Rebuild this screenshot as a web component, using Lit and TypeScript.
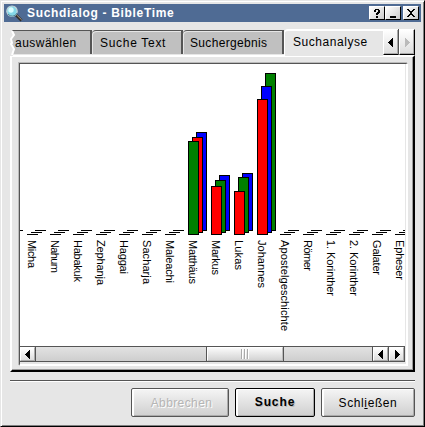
import { LitElement, html, svg, css } from "lit";
import { customElement } from "lit/decorators.js";

type Bar = [color: string, top: number];
interface Book { name: string; len: number; bars?: Bar[] }

const R = "#ff0000", G = "#008000", B = "#0000ff";

// Bars are listed back to front.
const books: Book[] = [
  { name: "", len: 0 },
  { name: "Micha", len: 28 },
  { name: "Nahum", len: 33 },
  { name: "Habakuk", len: 42 },
  { name: "Zephanja", len: 45 },
  { name: "Haggai", len: 34 },
  { name: "Sacharja", len: 44 },
  { name: "Maleachi", len: 43 },
  { name: "Matthäus", len: 44, bars: [[B, 132], [R, 137], [G, 141]] },
  { name: "Markus", len: 35, bars: [[B, 175], [G, 180], [R, 186]] },
  { name: "Lukas", len: 30, bars: [[B, 173], [G, 177], [R, 191]] },
  { name: "Johannes", len: 48, bars: [[G, 73], [B, 86], [R, 99]] },
  { name: "Apostelgeschichte", len: 91 },
  { name: "Römer", len: 31 },
  { name: "1. Korinther", len: 56 },
  { name: "2. Korinther", len: 56 },
  { name: "Galater", len: 35 },
  { name: "Epheser", len: 40 },
];

@customElement("search-chart")
export class SearchChart extends LitElement {
  static styles = css`
    :host { display: block; background: #fff; overflow: hidden; }
    svg { display: block; width: 100%; height: 100%; }
    text { font: 11px "Liberation Sans", Arial, sans-serif; fill: #000; }
  `;
  render() {
    return html`<svg viewBox="20 64 385 282" shape-rendering="crispEdges">
      ${books.map((b, i) => {
        const x = 4 + i * 23;
        return svg`
          ${[0, 1, 2].map((k) => {
            const left = x + 8 - 4 * k, bottom = 231 + 2 * k, bar = b.bars?.[k];
            return bar
              ? svg`<rect x=${left + 0.5} y=${bar[1] + 0.5} width="10" height=${bottom - bar[1] - 1} fill=${bar[0]} stroke="#000"/>`
              : svg`<rect x=${left} y=${bottom - 1} width="11" height="1" fill="#000"/>`;
          })}
          ${b.name ? svg`<text transform="translate(${x + 1} 240) rotate(90)" textLength=${b.len}>${b.name}</text>` : ""}`;
      })}
    </svg>`;
  }
}

@customElement("app-root")
export class AppRoot extends LitElement {
  static styles = css`
    :host { display: block; font: 12px/15px "Liberation Sans", Arial, sans-serif; color: #000; }
    * { box-sizing: border-box; }
    svg { display: block; }
    .window { width: 425px; height: 427px; background: #e6e6e6; padding: 2px 2px 0 3px;
      border: 1px solid; border-color: #e6e6e6 #000 #000 #e6e6e6;
      box-shadow: inset 1px 1px #fff, inset -1px -1px #808080; }
    .title { height: 18px; margin-top: 1px; width: 417px; background: #4f6b94; display: flex; align-items: center; padding: 0 2px 0 2px; color: #fff; }
    .title b { flex: 1; margin-left: 4px; letter-spacing: 0.68px; white-space: nowrap; }
    .tb { width: 16px; height: 14px; background: linear-gradient(135deg, #fff, #ccc); border: 1px solid;
      border-color: #fff #000 #000 #fff; display: grid; place-items: center; }
    .tb.gap { margin-left: 2px; }
    .tabs { display: flex; height: 32px; margin: 8px 0 0 6px; width: 405px; align-items: flex-start; }
    .tab { position: relative; height: 24px; background: #c0c0c0; border-top: 1px solid #555; border-right: 2px solid #555;
      padding: 5px 0 0 8px; white-space: nowrap; }
    .t1 { width: 82px; padding-left: 5px; letter-spacing: .48px; }
    .t2 { width: 91px; letter-spacing: .7px; border-top-left-radius: 4px; box-shadow: inset 1px 1px #e6e6e6; }
    .t3 { width: 101px; letter-spacing: .33px; padding-left: 7px; border-top-left-radius: 4px; box-shadow: inset 1px 1px #e6e6e6; }
    .t4 { width: 99px; letter-spacing: .55px; padding: 4px 0 0 8px; height: 27px; margin-top: -1px; background: #e6e6e6; border: 0 solid #fff; border-width: 2px 0 0 1px; border-top-left-radius: 4px; }
    .tear { position: absolute; left: 0; top: -1px; }
    .nav { height: 26px; width: 16px; margin-top: -1px; border: 1px solid; border-color: #fff #000 #000 #fff; box-shadow: inset -1px -1px #aaa, -1px 0 #555;
      background: linear-gradient(#fff, #ddd); display: grid; place-items: center; }
    .panel { width: 405px; height: 317px; margin: -7px 0 0 6px; border: 2px solid; border-color: #fff #000 #000 #fff;
      box-shadow: inset -1px -1px #999; padding: 5px 7px 7px 6px; }
    .view { width: 389px; height: 303px; border: solid; border-width: 1px 2px 2px 1px; border-color: #555 #fff #fff #555; box-shadow: -1px -1px #bbb; margin: 1px 0 0 1px; }
    search-chart { width: 385px; height: 282px; }
    .scroll { display: flex; width: 385px; height: 16px; border: 1px solid #555; border-left-width: 0; background: linear-gradient(#e2e2e2, #cecece); }
    .sb { width: 15px; height: 14px; border: 1px solid; border-color: #fff #aaa #aaa #fff; background: linear-gradient(#fff, #ddd); display: grid; place-items: center; }
    .sp { width: 1px; background: #555; }
    .track { width: 170px; }
    .track2 { flex: 1; }
    .thumb { width: 76px; border: 1px solid; border-color: #fff #bbb #bbb #fff; background: linear-gradient(#fafafa, #d4d4d4); display: flex; gap: 1px; justify-content: center; align-items: center; }
    .thumb i { width: 2px; height: 10px; background: linear-gradient(90deg, #aaa 50%, #fff 50%); }
    .rule { height: 2px; width: 405px; margin: 8px 0 0 6px; border-top: 1px solid #555; background: #fff; }
    .buttons { display: flex; gap: 6px; width: 405px; margin: 6px 0 0 6px; justify-content: flex-end; }
    .btn { height: 29px; border: 1px solid #555; border-radius: 2px; text-align: center; padding-top: 7px;
      background: linear-gradient(#f5f5f5, #cfcfcf); box-shadow: inset 2px 1px #fff, inset -1px -1px #aaa; letter-spacing: .6px; white-space: nowrap; }
    .off1 { width: 98px; color: #b5b5b5; text-shadow: 1px 1px #fff; letter-spacing: .4px; padding-left: 3px; }
    .def { width: 80px; border-color: #000; font-weight: bold; padding-top: 6px; text-shadow: 1px 1px #bbb; letter-spacing: .9px; }
    .close { width: 94px; }
  `;

  arrow(right: boolean, color = "#000") {
    return html`<svg width="6" height="9" viewBox="0 0 6 9" shape-rendering="crispEdges">
      <path fill=${color} d=${right ? "M1 0h1v1h1v1h1v1h1v1h1v1h-1v1h-1v1h-1v1h-1v1h-1z" : "M5 0h-1v1h-1v1h-1v1h-1v1h-1v1h1v1h1v1h1v1h1v1h1z"}/></svg>`;
  }

  render() {
    return html`<div class="window">
      <div class="title">
        <svg width="17" height="17" viewBox="0 0 17 17">
          <path d="M9.500 9.500L15.500 15.500" stroke="#302c28" stroke-width="2.800"/>
          <path d="M10.500 9.800L15.700 14.900" stroke="#b8a890" stroke-width="0.900"/>
          <circle cx="6" cy="6.200" r="5.200" fill="#84d8e8" stroke="#c4d4d8" stroke-width="1.200"/>
          <path d="M2 9A5.200 5.200 0 0 0 11 8" fill="none" stroke="#407c90" stroke-width="0.900"/>
          <circle cx="5" cy="5" r="2.700" fill="#d8fcff"/>
        </svg>
        <b>Suchdialog - BibleTime</b>
        <span class="tb"><svg width="7" height="9" viewBox="0 0 7 9" shape-rendering="crispEdges"><path d="M1 0h4v1h1v3h-1v1h-1v1h-2v-2h1v-1h1v-2h-2v2h-2v-2h1zM2 7h2v2h-2z"/></svg></span>
        <span class="tb"><svg width="7" height="9" viewBox="0 0 7 9" shape-rendering="crispEdges"><path d="M0 7h6v2h-6z"/></svg></span>
        <span class="tb gap"><svg width="8" height="8" viewBox="0 0 8 8" shape-rendering="crispEdges"><path d="M0 0h2v1h1v1h2v-1h1v-1h2v1h-1v1h-1v1h-1v2h1v1h1v1h1v1h-2v-1h-1v-1h-2v1h-1v1h-2v-1h1v-1h1v-1h1v-2h-1v-1h-1v-1h-1z"/></svg></span>
      </div>
      <div class="tabs">
        <div class="tab t1"><svg class="tear" width="6" height="26" viewBox="0 0 6 26"><path d="M0 0h2l2 5-3 4 1 4-1 1 3 5-1 7H0z" fill="#e6e6e6"/><path d="M2 1l2 4-3 4 1 4-1 1 3 5-2 6" fill="none" stroke="#fff" stroke-width="2"/></svg>auswählen</div>
        <div class="tab t2">Suche Text</div>
        <div class="tab t3">Suchergebnis</div>
        <div class="tab t4">Suchanalyse</div>
        <div class="nav">${this.arrow(false)}</div>
        <div class="nav">${this.arrow(true, "#bbb")}</div>
      </div>
      <div class="panel">
        <div class="view">
          <search-chart></search-chart>
          <div class="scroll">
            <span class="sb">${this.arrow(false)}</span><span class="sp"></span>
            <span class="track"></span><span class="sp"></span>
            <span class="thumb"><i></i><i></i><i></i></span><span class="sp"></span>
            <span class="track2"></span><span class="sp"></span>
            <span class="sb">${this.arrow(false)}</span><span class="sp"></span>
            <span class="sb">${this.arrow(true)}</span>
          </div>
        </div>
      </div>
      <div class="rule"></div>
      <div class="buttons">
        <div class="btn off1">Abbrechen</div>
        <div class="btn def">Suche</div>
        <div class="btn close">Schl<u>i</u>eßen</div>
      </div>
    </div>`;
  }
}
